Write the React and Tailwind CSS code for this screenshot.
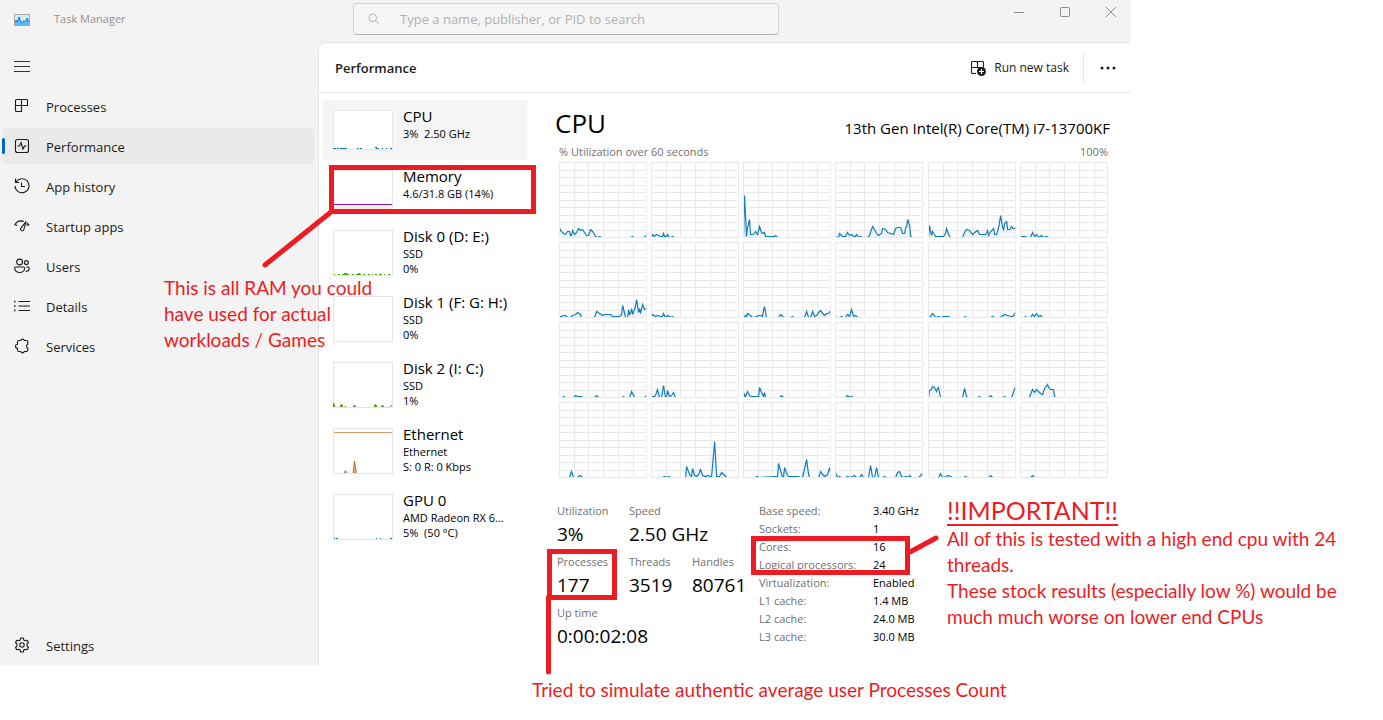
import React from 'react';

const NAV_ITEMS = [
  { id: 'processes', label: 'Processes' },
  { id: 'performance', label: 'Performance', active: true },
  { id: 'history', label: 'App history' },
  { id: 'startup', label: 'Startup apps' },
  { id: 'users', label: 'Users' },
  { id: 'details', label: 'Details' },
  { id: 'services', label: 'Services' },
];

// "x,height" samples, 88 units wide, height measured up from the bottom border
const CORES = [
  '0,10 1,7 4,4 6,3 8,6 10,6 11,2 12,2 13,7 15,3 17,5 19,9 21,7 23,8 25,5 27,2 29,2 31,8 33,6 35,3 36,1 38,0 40,1 42,0 71,0 73,1 74,0 84,0 87,2',
  '0,0 1,3 3,1 5,3 7,2 9,1 11,1 12,4 13,1 15,1 16,3 18,0 20,0 21,1 23,0',
  '0,0 1,42 3,1 4,10 6,18 7,3 10,3 12,6 14,3 16,11 18,5 20,4 21,5 22,1 31,1 32,2 34,0',
  '0,1 3,0 4,4 7,1 10,1 12,5 14,2 16,3 18,1 20,1 21,3 23,0 25,1 27,0 32,0 34,2 36,8 37,11 39,8 41,4 43,2 46,4 47,9 50,8 52,5 55,4 58,3 60,9 62,10 65,10 67,4 69,4 70,10 71,11 72,18 74,12 75,1 76,0',
  '0,0 1,12 3,2 4,6 6,3 7,1 12,1 15,1 17,4 18,9 20,3 22,0 34,0 36,5 38,8 41,7 44,3 46,5 49,7 51,3 54,3 57,3 59,7 60,2 62,6 65,9 66,3 68,3 70,10 72,22 74,10 75,8 76,14 78,16 79,8 81,8 83,11 84,9 86,9 87,10',
  '0,1 5,1 7,0 10,0 12,5 14,1 16,3 18,0 21,2 23,0 26,1 28,0',
  '0,1 2,1 4,2 6,2 8,0 11,0 13,2 16,3 18,5 21,3 22,0 35,0 37,6 40,4 43,2 45,3 48,3 51,3 53,1 57,1 60,1 62,3 63,12 65,4 66,0 68,0 69,8 70,3 71,4 72,9 73,3 74,6 75,8 76,12 77,18 78,11 79,5 80,8 81,5 83,13 85,8 87,9',
  '0,1 1,3 4,1 6,2 9,1 11,1 12,4 14,0 16,2 18,1 20,0 21,1 22,0',
  '0,0 2,2 3,1 4,4 7,2 9,0 11,0 13,1 15,2 18,2 19,1 20,7 21,11 23,0 35,0 37,3 39,1 41,0 47,0 49,1 50,0 61,0 62,3 63,6 65,0 67,0 69,6 71,1 73,2 75,5 77,7 79,4 81,2 83,4 85,4 87,7',
  '0,1 1,0 4,0 6,1 7,0 10,0 12,3 14,1 16,8 18,1 20,2 22,0',
  '0,0 2,1 4,4 6,2 7,0 10,1 12,0 15,1 20,1 22,0 35,0 37,1 38,0 62,0 64,1 66,0 71,0 73,1 76,3 79,2 82,1 84,1 86,3 87,6',
  '4,0 5,1 6,0 10,0 12,3 14,1 16,4 18,1 20,2 22,0',
  '3,0 4,1 6,0 14,0 16,2 18,1 22,1 23,0 35,0 37,2 39,0 63,0 64,1 65,0 70,0 72,6 75,0 85,0 87,2',
  '0,1 3,1 4,2 6,8 8,0 10,0 12,12 14,0 15,0 16,7 18,1 20,2 22,5 24,0',
  '0,0 1,3 2,1 4,6 6,2 8,1 14,1 15,0 16,10 18,5 20,1 21,5 22,0 36,0 38,2 40,0',
  '10,0 12,2 14,0 16,1 18,0',
  '0,0 1,7 3,8 4,11 6,10 8,6 9,9 10,10 12,0 34,0 36,9 38,1 39,0 49,0 51,1 52,0 60,0 62,2 64,0 74,0 76,1 77,0 83,0 86,9 87,10',
  '9,0 10,3 12,8 14,5 16,8 18,6 20,4 22,3 24,9 27,13 28,10 30,8 32,8 33,8 34,1 35,0',
  '10,0 12,6 14,0 18,0 20,2 22,1 23,0',
  '11,0 13,1 15,0 17,1 19,0 34,0 35,11 38,3 40,1 41,9 43,2 45,1 47,3 49,8 51,2 54,1 56,2 58,1 60,1 63,36 65,1 68,1 70,5 73,2 75,0',
  '11,0 14,1 15,0 32,1 34,1 35,14 37,7 39,0 40,1 41,10 43,4 45,1 53,1 55,1 57,0 59,0 63,18 65,3 66,0 75,0 77,6 79,3 81,1 84,3 86,10 87,5',
  '0,5 2,0 4,1 6,0 10,0 12,1 14,0 17,1 19,2 21,0 24,0 26,3 28,0 33,0 35,12 37,0 39,0 41,10 43,0 47,0 49,1 51,0 60,0 62,5 64,6 66,1 68,0 70,1 72,0 74,2 76,0 83,0 87,4',
  '10,0 12,4 14,0 18,1 20,2 22,1 24,0 35,0 37,1 39,0 60,0 62,2 64,0',
  '10,0 12,2 14,0',
];

const DEVICES = [
  { id: 'cpu', title: 'CPU', lines: ['3%  2.50 GHz'], active: true },
  { id: 'memory', title: 'Memory', lines: ['4.6/31.8 GB (14%)'] },
  { id: 'disk0', title: 'Disk 0 (D: E:)', lines: ['SSD', '0%'] },
  { id: 'disk1', title: 'Disk 1 (F: G: H:)', lines: ['SSD', '0%'] },
  { id: 'disk2', title: 'Disk 2 (I: C:)', lines: ['SSD', '1%'] },
  { id: 'ethernet', title: 'Ethernet', lines: ['Ethernet', 'S: 0 R: 0 Kbps'] },
  { id: 'gpu', title: 'GPU 0', lines: ['AMD Radeon RX 6...', '5%  (50 °C)'] },
];

const SPECS = [
  ['Base speed:', '3.40 GHz'],
  ['Sockets:', '1'],
  ['Cores:', '16'],
  ['Logical processors:', '24'],
  ['Virtualization:', 'Enabled'],
  ['L1 cache:', '1.4 MB'],
  ['L2 cache:', '24.0 MB'],
  ['L3 cache:', '30.0 MB'],
];

const ICON_PATHS = {
  processes: (
    <>
      <path d="M2.5 1.5h10a1 1 0 0 1 1 1v5h-12v-5a1 1 0 0 1 1-1z" />
      <path d="M7.5 1.500v12h-5a1 1 0 0 1-1-1v-5" />
    </>
  ),
  performance: (
    <>
      <rect x="1.5" y="1.5" width="13" height="13" rx="2" />
      <path d="M3.5 8h2L7 4.5 9 11l1.5-3h2" />
    </>
  ),
  history: (
    <>
      <path d="M1.5 .8v3.7h3.8" />
      <path d="M1.9 4.3A7 7 0 1 1 1 8" />
      <path d="M7.5 4.5v4H11" />
    </>
  ),
  startup: (
    <>
      <path d="M.6 7.200C1.800 4.600 4.200 3 7 2.900c1.200 0 2 .1 2.800.5" />
      <path d="M13 5.200c.9.600 1.700 1.300 2.300 2.200" />
      <path d="M1.200 6.800l2.100.7M12.500 7.500l2-.9" />
      <path d="M12.200 3.400 7.100 9.800a1.700 1.700 0 1 0 2.600 2.100z" />
    </>
  ),
  users: (
    <>
      <circle cx="5.6" cy="4" r="2.9" />
      <circle cx="12.4" cy="4.6" r="2" />
      <path d="M2 9h7.500a1 1 0 0 1 1 1v.8c0 2-2 3.700-4.800 3.700S.8 12.800.8 10.800V10A1 1 0 0 1 2 9z" />
      <path d="M12.200 9h2a1 1 0 0 1 1 1c0 2-1.300 3.400-3.600 3.400" />
    </>
  ),
  details: (
    <>
      <path d="M4.500 3.500H16M4.500 8H16M4.500 12.500H16" />
      <path d="M0 3.500h2M0 8h2M0 12.500h2" strokeDasharray="1.500 .5" strokeWidth="1.600" />
    </>
  ),
  services: (
    <path d="M5 2.500h1.800a1.800 1.800 0 0 1 3.500 0h2a1.500 1.500 0 0 1 1.500 1.500v2.200a1.800 1.800 0 0 0 0 3.500V12a1.500 1.500 0 0 1-1.500 1.500h-2a1.800 1.800 0 0 1-3.500 0H5A1.500 1.500 0 0 1 3.500 12v-1.800a2 2 0 0 1 0-4V4A1.500 1.500 0 0 1 5 2.500z" />
  ),
  settings: (
    <>
      <circle cx="8" cy="8" r="2.200" />
      <path d="M6.700 1h2.600l.5 2 1.400.8 2-.6 1.300 2.300-1.500 1.500v2l1.500 1.500-1.300 2.300-2-.6-1.400.8-.5 2H6.700l-.5-2-1.400-.8-2 .6-1.300-2.300L3 9V7L1.500 5.500l1.300-2.300 2 .6L6.200 3z" strokeLinejoin="round" />
    </>
  ),
};

const NavIcon = ({ name }) => (
  <svg className="size-4 shrink-0" viewBox="0 0 16 16" fill="none" stroke="currentColor" strokeWidth="1.1">
    {ICON_PATHS[name]}
  </svg>
);

const NavButton = ({ id, label, active }) => (
  <button
    className={`relative flex h-9 w-full items-center gap-4 rounded px-3 text-left text-[13px] text-[#1b1b1b] ${
      active ? 'bg-[#eaeaea]' : ''
    }`}
  >
    {active && <span className="absolute top-2.5 left-0 h-4 w-[3px] rounded-full bg-[#0067c0]" />}
    <NavIcon name={id} />
    <span className="pt-[3px]">{label}</span>
  </button>
);

const TitleBar = () => (
  <header className="grid h-[42px] grid-cols-[353px_minmax(0,426px)_1fr]">
    <div className="flex h-10 items-center gap-6 px-3.5">
      <svg className="h-3 w-4" viewBox="0 0 16 12">
        <rect x=".5" y=".5" width="15" height="11" fill="#d5ecfb" stroke="#a3a9ad" />
        <path d="M1 8l1-2 1.500 2L5 3l2 5 1.500 1L10 6.500l1.500 1.500 1.500-4L15 8v3H1z" fill="#5fb9f5" />
        <path d="M1 8l1-2 1.500 2L5 3l2 5 1.500 1L10 6.500l1.500 1.500 1.500-4L15 8" fill="none" stroke="#1273c4" strokeWidth=".9" />
      </svg>
      <span className="pb-0.5 text-[11px] text-[#929292]">Task Manager</span>
    </div>
    <label className="mt-[3px] flex h-8 items-center gap-5 rounded border border-[#d2d2d2] border-b-[#b4b4b4] bg-[#f6f6f6] px-3.5">
      <svg className="size-3 shrink-0" viewBox="0 0 12 12" fill="none" stroke="#b4b4b4">
        <circle cx="4.800" cy="4.800" r="3.800" />
        <path d="M7.600 7.600 11.500 11.500" />
      </svg>
      <input
        type="text"
        aria-label="Search"
        placeholder="Type a name, publisher, or PID to search"
        className="w-full bg-transparent pt-0.5 text-[13px] outline-none placeholder:text-[#b1b1b1]"
      />
    </label>
    <div className="flex h-6 items-center justify-end gap-1.5 text-[#8b8b8b]">
      <button aria-label="Minimize" className="flex w-10 justify-center">
        <svg className="size-2.5" viewBox="0 0 10 10" stroke="currentColor"><path d="M0 5.500h10" /></svg>
      </button>
      <button aria-label="Maximize" className="flex w-10 justify-center">
        <svg className="size-2.5" viewBox="0 0 10 10" fill="none" stroke="currentColor"><rect x=".5" y=".5" width="9" height="9" rx="1" /></svg>
      </button>
      <button aria-label="Close" className="flex w-10 justify-center">
        <svg className="size-2.5" viewBox="0 0 10 10" stroke="currentColor"><path d="M0 0l10 10M10 0L0 10" /></svg>
      </button>
    </div>
  </header>
);

const Sidebar = () => (
  <nav className="flex w-[318px] shrink-0 flex-col pr-1 pb-0.5 pl-0.5">
    <button aria-label="Menu" className="mb-2.5 flex h-9 items-center px-3 pt-3 text-[#333]">
      <svg className="size-4" viewBox="0 0 16 16" stroke="currentColor">
        <path d="M0 3.500h16M0 8.500h16M0 13.500h16" />
      </svg>
    </button>
    <div className="flex flex-col gap-1">
      {NAV_ITEMS.map((item) => (
        <NavButton key={item.id} {...item} />
      ))}
    </div>
    <div className="mt-auto">
      <NavButton id="settings" label="Settings" />
    </div>
  </nav>
);

const THUMB_CONTENT = {
  cpu: <path d="M0 38.500h3M4 38.500h2M7 38.500h7M24 38.500h2M27 38.500h2M42 37.500h2M43 38.500h3M49 38.500h1M53 38.500h1M57 38.500h2" stroke="#117dbb" />,
  memory: (
    <>
      <path d="M1 34h58v5H1z" fill="#f4f2f9" />
      <path d="M1 34.500h58" stroke="#8b12ae" />
    </>
  ),
  disk0: <path d="M1 44.500h1M5 44.500h2M9 44.500h7M11 43.500h3M19 44.500h2M23 44.500h5M25 43.500h2M30 44.500h2M35 44.500h2M39 44.500h1M42 44.500h2M46 44.500h3M51 44.500h1M55 44.500h2" stroke="#4da60c" />,
  disk1: null,
  disk2: <path d="M0 45l.5-4L2 45M7 45l1.500-3 1.500 3M12 45l.5-1 .5 1M20 45l1.500-2 1.500 2M41 45l1.500-3 1.500 3M48 45l1.500-2 1.500 2M57 45l2-2" stroke="#4da60c" fill="#4da60c" />,
  ethernet: (
    <>
      <path d="M1 4.500h58" stroke="#d99a63" />
      <path d="M11 45l1.500-2.500L14 45M20 45l1.500-12L23.500 45" stroke="#a74f01" strokeWidth=".7" fill="#e0a878" />
    </>
  ),
  gpu: <path d="M1 44.500h1M3 44.500h2M43 44.500h1M47 44.500h1M57 44.500h2" stroke="#117dbb" />,
};

const DeviceItem = ({ id, title, lines, active }) => {
  const h = lines.length > 1 ? 46 : 40;
  return (
    <button className={`flex items-start gap-2.5 p-2.5 text-left text-black ${active ? 'bg-[#f5f5f5]' : ''}`}>
      <svg width="60" height={h} viewBox={`0 0 60 ${h}`} className="shrink-0">
        <rect x=".5" y=".5" width="59" height={h - 1} fill="#fff" stroke="#e6e6e6" />
        {THUMB_CONTENT[id]}
      </svg>
      <span className="-my-1 flex flex-col">
        <span className="h-5 text-[15px] leading-[21px]">{title}</span>
        {lines.map((line) => (
          <span key={line} className="h-[15px] text-[11px] leading-[15px] whitespace-pre">{line}</span>
        ))}
      </span>
    </button>
  );
};

const CoreChart = ({ data }) => {
  const points = data.split(' ').map((p) => p.split(',').map(Number));
  const line = points.map(([x, v]) => `${x + 0.5},${75.5 - v}`).join(' ');
  const first = points[0][0] + 0.5;
  const last = points[points.length - 1][0] + 0.5;
  return (
    <svg className="h-[76px] w-full" viewBox="0 0 88 76" preserveAspectRatio="none" fill="none">
      <polygon points={`${first},75.5 ${line} ${last},75.5`} fill="#f1f6fa" />
      <path
        d="M15.500 0v75M29.500 0v75M44.500 0v75M59.500 0v75M74.500 0v75M0 8.500h86M0 15.500h86M0 23.500h86M0 30.500h86M0 38.500h86M0 45.500h86M0 53.500h86M0 60.500h86M0 68.500h86"
        stroke="#e8e8e8"
      />
      <polyline points={line} stroke="#117dbb" strokeWidth="1.2" />
      <rect x=".5" y=".5" width="87" height="75" stroke="#e8e8e8" />
    </svg>
  );
};

const Stat = ({ label, value, className = '' }) => (
  <div className={className}>
    <dt className="h-5 text-[11px] leading-5 text-[#707070]">{label}</dt>
    <dd className="h-[31px] text-[19px] leading-[26px] text-black">{value}</dd>
  </div>
);

const CpuDetail = () => (
  <section className="min-w-0 flex-1 pr-[23px] pl-8">
    <div className="-mr-0.5 -ml-1 flex h-[46px] items-center justify-between text-black">
      <h2 className="text-[26px] leading-none">CPU</h2>
      <span className="pt-2.5 text-[15px]">13th Gen Intel(R) Core(TM) i7-13700KF</span>
    </div>
    <div className="flex h-4 items-center justify-between pb-1 text-[11px] text-[#707070]">
      <span>% Utilization over 60 seconds</span>
      <span>100%</span>
    </div>
    <div className="grid grid-cols-6 gap-1">
      {CORES.map((data, i) => (
        <CoreChart key={i} data={data} />
      ))}
    </div>
    <div className="mt-[23px] -ml-0.5 flex pb-2.5">
      <dl className="grid w-[202px] grid-cols-[72px_63px_1fr] content-start">
        <Stat label="Utilization" value="3%" />
        <Stat label="Speed" value="2.50 GHz" className="col-span-2" />
        <Stat label="Processes" value="177" />
        <Stat label="Threads" value="3519" />
        <Stat label="Handles" value="80761" />
        <Stat label="Up time" value="0:00:02:08" className="col-span-3" />
      </dl>
      <table className="mt-px self-start text-[11px]">
        <tbody>
          {SPECS.map(([label, value]) => (
            <tr key={label} className="h-[18px] leading-[18px]">
              <th className="w-[114px] p-0 text-left font-normal text-[#707070]">{label}</th>
              <td className="p-0 text-black">{value}</td>
            </tr>
          ))}
        </tbody>
      </table>
    </div>
  </section>
);

const Panel = () => (
  <main className="flex min-w-0 flex-1 flex-col rounded-tl-lg border-t border-l border-[#e5e5e5] bg-white">
    <div className="flex h-[50px] items-center border-b border-[#ebebeb] pl-4">
      <h1 className="pt-0.5 text-[13px] font-semibold text-[#1b1b1b]">Performance</h1>
      <button className="ml-auto flex items-center gap-2 pr-3.5 text-[12px] text-[#1b1b1b]">
        <svg className="size-4" viewBox="0 0 16 16" fill="none" stroke="currentColor" strokeWidth="1.1">
          <path d="M13.500 7V2.500a1 1 0 0 0-1-1h-10a1 1 0 0 0-1 1v10a1 1 0 0 0 1 1H6M7.500 1.500V7M1.500 7.500h12" />
          <circle cx="11.500" cy="11.500" r="4.500" fill="currentColor" stroke="none" />
          <path d="M11.500 9v5M9 11.500h5" stroke="#fff" />
        </svg>
        Run new task
      </button>
      <button aria-label="More" className="flex h-8 w-12 items-center justify-center border-l border-[#e5e5e5]">
        <svg className="h-1 w-4" viewBox="0 0 16 4" fill="#1b1b1b">
          <circle cx="2" cy="2" r="1.500" />
          <circle cx="8" cy="2" r="1.500" />
          <circle cx="14" cy="2" r="1.500" />
        </svg>
      </button>
    </div>
    <div className="flex pt-[7px]">
      <div className="ml-1 flex w-[204px] shrink-0 flex-col">
        {DEVICES.map((device) => (
          <DeviceItem key={device.id} {...device} />
        ))}
      </div>
      <CpuDetail />
    </div>
  </main>
);

// Red pen marks and comments drawn on top of the window
const Annotations = () => (
  <div className="pointer-events-none absolute inset-0 font-['Lato',sans-serif] text-[19px] leading-[26px] text-[#ed1c24]">
    <svg className="absolute top-0 left-0" width="1131" height="720" fill="none" stroke="#ed1c24" strokeWidth="5" strokeLinecap="round">
      <rect x="331.500" y="167.500" width="202" height="44" />
      <path d="M331 212 265 265" />
      <rect x="549.500" y="551.500" width="65" height="46" />
      <path d="M548.500 597V672" />
      <rect x="753.500" y="538.500" width="154" height="34" />
      <path d="M910 552 936 538" />
    </svg>
    <p className="absolute top-[275px] left-[164px] w-[230px]">
      This is all RAM you could
      <br />
      have used for actual
      <br />
      workloads / Games
    </p>
    <div className="absolute top-[495px] left-[947px] w-[420px]">
      <h3 className="text-[25px] leading-[31px] underline underline-offset-4">!!IMPORTANT!!</h3>
      <p>
        All of this is tested with a high end cpu with 24
        <br />
        threads.
        <br />
        These stock results (especially low %) would be
        <br />
        much much worse on lower end CPUs
      </p>
    </div>
    <p className="absolute top-[677px] left-[532px] whitespace-nowrap">
      Tried to simulate authentic average user Processes Count
    </p>
  </div>
);

const App = () => (
  <div className="relative min-h-screen bg-white pr-[252px] font-['Open_Sans',sans-serif]">
    <div className="flex min-h-[665px] flex-col bg-[#f3f3f3]">
      <TitleBar />
      <div className="flex flex-1">
        <Sidebar />
        <Panel />
      </div>
    </div>
    <Annotations />
  </div>
);

export default App;
